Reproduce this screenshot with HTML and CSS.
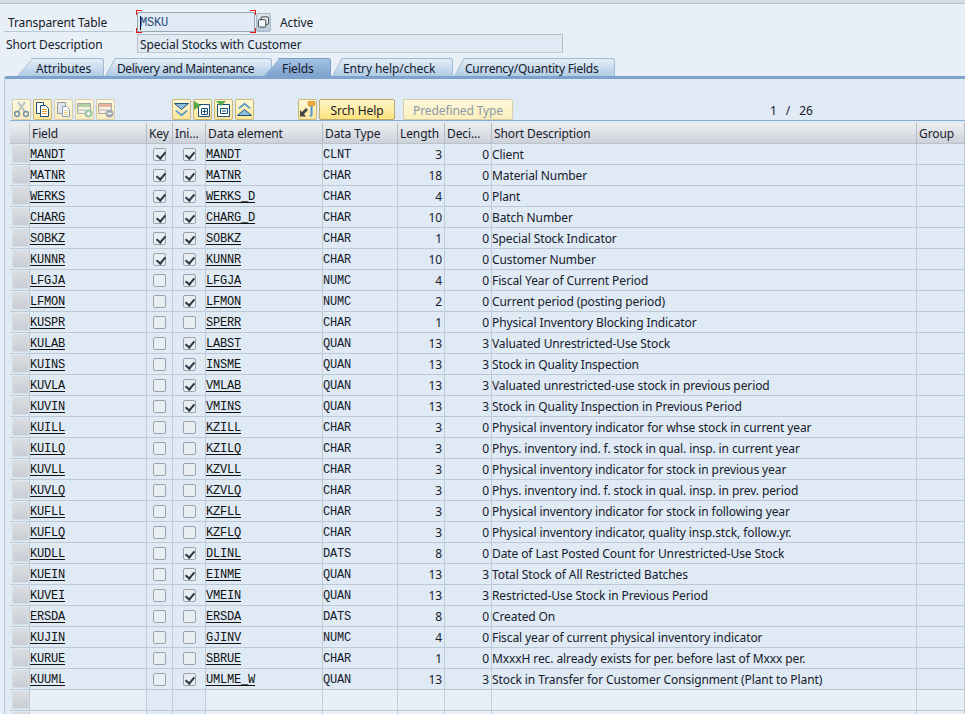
FILE: index.html
```html
<!DOCTYPE html>
<html lang="en">
<head>
<meta charset="utf-8">
<title>Transparent Table MSKU</title>
<link rel="stylesheet" href="styles.css">
</head>
<body>
<div class="topstrip"></div>
<section class="form">
  <div class="form-row first">
    <label class="lab lab-a">Transparent Table</label>
    <div class="focus-field"><div class="input input-name"><span class="caret"></span><span class="mono">MSKU</span></div></div>
    <button class="copybtn" aria-label="Other object"><svg width="14" height="14" viewBox="0 0 14 14"><rect x="4.500" y="1.500" width="8" height="8" rx="1" fill="#e8eff7" stroke="#333"/><rect x="1.500" y="4.500" width="8" height="8" rx="1" fill="#f4f7fa" stroke="#333"/></svg></button>
    <span class="status">Active</span>
  </div>
  <div class="form-row second">
    <label class="lab lab-b">Short Description</label>
    <div class="input input-desc">Special Stocks with Customer</div>
  </div>
</section>
<nav class="tabs">
  <div class="tab t1">Attributes</div>
  <div class="tab t2">Delivery and Maintenance</div>
  <div class="tab t3 active">Fields</div>
  <div class="tab t4">Entry help/check</div>
  <div class="tab t5">Currency/Quantity Fields</div>
</nav>
<main class="panel">
  <div class="toolbar">
    <div class="tgroup g1">
      <button class="ib dim"><svg viewBox="0 0 17 17"><path d="M5 1l7 10M12 1L5 11" stroke="#b9c2c4" stroke-width="2" fill="none"/><circle cx="4" cy="13" r="2.400" fill="none" stroke="#6f93ad" stroke-width="1.500"/><circle cx="13" cy="13" r="2.400" fill="none" stroke="#6f93ad" stroke-width="1.500"/></svg></button>
      <button class="ib"><svg viewBox="0 0 17 17"><path d="M2.500 1.500h7v11h-7z" fill="#fff" stroke="#1c4f78"/><path d="M6.500 4.500h5l3 3v8h-8z" fill="#fff" stroke="#1c4f78"/><path d="M8 8.500h5M8 10.500h5M8 12.500h5" stroke="#e0a030"/></svg></button>
      <button class="ib dim"><svg viewBox="0 0 17 17"><path d="M2.500 1.500h8v11h-8z" fill="#e4e8ec" stroke="#8d9aa6"/><path d="M7.500 5.500h4l3 3v7h-7z" fill="#fff" stroke="#7e9cb4"/><path d="M9 9.500h4M9 11.500h4M9 13.500h4" stroke="#ecc777"/></svg></button>
      <button class="ib dim"><svg viewBox="0 0 17 17"><path d="M1.500 2.500h13v10h-13z" fill="#f6f3e4" stroke="#a3aca0"/><path d="M2 3h12v3H2z" fill="#b5cfa3"/><path d="M2 9h8" stroke="#a9b4a9"/><circle cx="12.500" cy="12.500" r="4" fill="#9cc5a6"/><path d="M10.500 12.500h4M12.500 10.500v4" stroke="#fff" stroke-width="1.500"/></svg></button>
      <button class="ib dim"><svg viewBox="0 0 17 17"><path d="M1.500 2.500h13v10h-13z" fill="#f6f3e4" stroke="#a9a9a0"/><path d="M2 3h12v3H2z" fill="#e9b3a1"/><path d="M2 9h8" stroke="#b5b5a8"/><circle cx="12.500" cy="12.500" r="4" fill="#a0a9b2"/><path d="M10.500 12.500h4" stroke="#fff" stroke-width="1.500"/></svg></button>
    </div>
    <div class="tgroup g2">
      <button class="ib"><svg viewBox="0 0 17 17"><path d="M1.500 2.500h14l-7 6z" fill="#8fbfe0" stroke="#1c4f78"/><path d="M3.500 9l5 4 5-4 1.500 1-6.500 5.500L2 10z" fill="#5d9ac8"/></svg></button>
      <button class="ib"><svg viewBox="0 0 17 17"><path d="M4.500 3.500h11v12h-11z" fill="#fff" stroke="#1c4f78"/><path d="M0 0l7 4.500L0 9z" fill="#5aa84a"/><path d="M7.500 7.500h6v6h-6z" fill="#fff" stroke="#1c4f78"/><path d="M8.500 10.500h4M10.500 8.500v4" stroke="#1c4f78"/></svg></button>
      <button class="ib"><svg viewBox="0 0 17 17"><path d="M2.500 3.500h12v12h-12z" fill="#fff" stroke="#1c4f78"/><path d="M1 0h10L6 5z" fill="#5aa84a"/><path d="M5.500 7.500h7v5h-7z" fill="#fff" stroke="#1c4f78"/><path d="M7 10h4" stroke="#1c4f78"/></svg></button>
      <button class="ib"><svg viewBox="0 0 17 17"><path d="M8.500 1.500l6.500 5.500-1.500 1-5-4-5 4L2 7z" fill="#5d9ac8"/><path d="M8.500 8.500l7 6h-14z" fill="#8fbfe0" stroke="#1c4f78"/></svg></button>
    </div>
    <div class="tgroup g3">
      <button class="ib"><svg viewBox="0 0 17 17"><rect x="9" y="0" width="7" height="5" rx="2" fill="#efa93a" stroke="#b8741a" stroke-width=".6"/><path d="M12.500 5v9l-1.500 1.500" stroke="#5d9ac8" stroke-width="2.200" fill="none"/><path d="M1 15.500V9l2 2 4-4 2 2-4 4 2 2.500z" fill="#444"/></svg></button>
      <button class="tb">Srch Help</button>
    </div>
    <button class="tb off predefined">Predefined Type</button>
    <span class="pager">1 / 26</span>
  </div>
  <div class="tablewrap">
  <table class="grid">
    <colgroup><col class="c0"><col class="c1"><col class="c2"><col class="c3"><col class="c4"><col class="c5"><col class="c6"><col class="c7"><col class="c8"><col class="c9"></colgroup>
    <thead><tr><th></th><th>Field</th><th>Key</th><th>Ini...</th><th>Data element</th><th>Data Type</th><th>Length</th><th>Deci...</th><th>Short Description</th><th>Group</th></tr></thead>
    <tbody>
<tr><td class="sel"><i></i></td><td class="fn">MANDT</td><td class="ck"><span class="cb on"></span></td><td class="ck"><span class="cb on"></span></td><td class="fn">MANDT</td><td class="ty">CLNT</td><td class="nu">3</td><td class="nu">0</td><td class="de">Client</td><td></td></tr>
<tr><td class="sel"><i></i></td><td class="fn">MATNR</td><td class="ck"><span class="cb on"></span></td><td class="ck"><span class="cb on"></span></td><td class="fn">MATNR</td><td class="ty">CHAR</td><td class="nu">18</td><td class="nu">0</td><td class="de">Material Number</td><td></td></tr>
<tr><td class="sel"><i></i></td><td class="fn">WERKS</td><td class="ck"><span class="cb on"></span></td><td class="ck"><span class="cb on"></span></td><td class="fn">WERKS_D</td><td class="ty">CHAR</td><td class="nu">4</td><td class="nu">0</td><td class="de">Plant</td><td></td></tr>
<tr><td class="sel"><i></i></td><td class="fn">CHARG</td><td class="ck"><span class="cb on"></span></td><td class="ck"><span class="cb on"></span></td><td class="fn">CHARG_D</td><td class="ty">CHAR</td><td class="nu">10</td><td class="nu">0</td><td class="de">Batch Number</td><td></td></tr>
<tr><td class="sel"><i></i></td><td class="fn">SOBKZ</td><td class="ck"><span class="cb on"></span></td><td class="ck"><span class="cb on"></span></td><td class="fn">SOBKZ</td><td class="ty">CHAR</td><td class="nu">1</td><td class="nu">0</td><td class="de">Special Stock Indicator</td><td></td></tr>
<tr><td class="sel"><i></i></td><td class="fn">KUNNR</td><td class="ck"><span class="cb on"></span></td><td class="ck"><span class="cb on"></span></td><td class="fn">KUNNR</td><td class="ty">CHAR</td><td class="nu">10</td><td class="nu">0</td><td class="de">Customer Number</td><td></td></tr>
<tr><td class="sel"><i></i></td><td class="fn">LFGJA</td><td class="ck"><span class="cb"></span></td><td class="ck"><span class="cb on"></span></td><td class="fn">LFGJA</td><td class="ty">NUMC</td><td class="nu">4</td><td class="nu">0</td><td class="de">Fiscal Year of Current Period</td><td></td></tr>
<tr><td class="sel"><i></i></td><td class="fn">LFMON</td><td class="ck"><span class="cb"></span></td><td class="ck"><span class="cb on"></span></td><td class="fn">LFMON</td><td class="ty">NUMC</td><td class="nu">2</td><td class="nu">0</td><td class="de">Current period (posting period)</td><td></td></tr>
<tr><td class="sel"><i></i></td><td class="fn">KUSPR</td><td class="ck"><span class="cb"></span></td><td class="ck"><span class="cb"></span></td><td class="fn">SPERR</td><td class="ty">CHAR</td><td class="nu">1</td><td class="nu">0</td><td class="de">Physical Inventory Blocking Indicator</td><td></td></tr>
<tr><td class="sel"><i></i></td><td class="fn">KULAB</td><td class="ck"><span class="cb"></span></td><td class="ck"><span class="cb on"></span></td><td class="fn">LABST</td><td class="ty">QUAN</td><td class="nu">13</td><td class="nu">3</td><td class="de">Valuated Unrestricted-Use Stock</td><td></td></tr>
<tr><td class="sel"><i></i></td><td class="fn">KUINS</td><td class="ck"><span class="cb"></span></td><td class="ck"><span class="cb on"></span></td><td class="fn">INSME</td><td class="ty">QUAN</td><td class="nu">13</td><td class="nu">3</td><td class="de">Stock in Quality Inspection</td><td></td></tr>
<tr><td class="sel"><i></i></td><td class="fn">KUVLA</td><td class="ck"><span class="cb"></span></td><td class="ck"><span class="cb on"></span></td><td class="fn">VMLAB</td><td class="ty">QUAN</td><td class="nu">13</td><td class="nu">3</td><td class="de">Valuated unrestricted-use stock in previous period</td><td></td></tr>
<tr><td class="sel"><i></i></td><td class="fn">KUVIN</td><td class="ck"><span class="cb"></span></td><td class="ck"><span class="cb on"></span></td><td class="fn">VMINS</td><td class="ty">QUAN</td><td class="nu">13</td><td class="nu">3</td><td class="de">Stock in Quality Inspection in Previous Period</td><td></td></tr>
<tr><td class="sel"><i></i></td><td class="fn">KUILL</td><td class="ck"><span class="cb"></span></td><td class="ck"><span class="cb"></span></td><td class="fn">KZILL</td><td class="ty">CHAR</td><td class="nu">3</td><td class="nu">0</td><td class="de">Physical inventory indicator for whse stock in current year</td><td></td></tr>
<tr><td class="sel"><i></i></td><td class="fn">KUILQ</td><td class="ck"><span class="cb"></span></td><td class="ck"><span class="cb"></span></td><td class="fn">KZILQ</td><td class="ty">CHAR</td><td class="nu">3</td><td class="nu">0</td><td class="de">Phys. inventory ind. f. stock in qual. insp. in current year</td><td></td></tr>
<tr><td class="sel"><i></i></td><td class="fn">KUVLL</td><td class="ck"><span class="cb"></span></td><td class="ck"><span class="cb"></span></td><td class="fn">KZVLL</td><td class="ty">CHAR</td><td class="nu">3</td><td class="nu">0</td><td class="de">Physical inventory indicator for stock in previous year</td><td></td></tr>
<tr><td class="sel"><i></i></td><td class="fn">KUVLQ</td><td class="ck"><span class="cb"></span></td><td class="ck"><span class="cb"></span></td><td class="fn">KZVLQ</td><td class="ty">CHAR</td><td class="nu">3</td><td class="nu">0</td><td class="de">Phys. inventory ind. f. stock in qual. insp. in prev. period</td><td></td></tr>
<tr><td class="sel"><i></i></td><td class="fn">KUFLL</td><td class="ck"><span class="cb"></span></td><td class="ck"><span class="cb"></span></td><td class="fn">KZFLL</td><td class="ty">CHAR</td><td class="nu">3</td><td class="nu">0</td><td class="de">Physical inventory indicator for stock in following year</td><td></td></tr>
<tr><td class="sel"><i></i></td><td class="fn">KUFLQ</td><td class="ck"><span class="cb"></span></td><td class="ck"><span class="cb"></span></td><td class="fn">KZFLQ</td><td class="ty">CHAR</td><td class="nu">3</td><td class="nu">0</td><td class="de">Physical inventory indicator, quality insp.stck, follow.yr.</td><td></td></tr>
<tr><td class="sel"><i></i></td><td class="fn">KUDLL</td><td class="ck"><span class="cb"></span></td><td class="ck"><span class="cb on"></span></td><td class="fn">DLINL</td><td class="ty">DATS</td><td class="nu">8</td><td class="nu">0</td><td class="de">Date of Last Posted Count for Unrestricted-Use Stock</td><td></td></tr>
<tr><td class="sel"><i></i></td><td class="fn">KUEIN</td><td class="ck"><span class="cb"></span></td><td class="ck"><span class="cb on"></span></td><td class="fn">EINME</td><td class="ty">QUAN</td><td class="nu">13</td><td class="nu">3</td><td class="de">Total Stock of All Restricted Batches</td><td></td></tr>
<tr><td class="sel"><i></i></td><td class="fn">KUVEI</td><td class="ck"><span class="cb"></span></td><td class="ck"><span class="cb on"></span></td><td class="fn">VMEIN</td><td class="ty">QUAN</td><td class="nu">13</td><td class="nu">3</td><td class="de">Restricted-Use Stock in Previous Period</td><td></td></tr>
<tr><td class="sel"><i></i></td><td class="fn">ERSDA</td><td class="ck"><span class="cb"></span></td><td class="ck"><span class="cb"></span></td><td class="fn">ERSDA</td><td class="ty">DATS</td><td class="nu">8</td><td class="nu">0</td><td class="de">Created On</td><td></td></tr>
<tr><td class="sel"><i></i></td><td class="fn">KUJIN</td><td class="ck"><span class="cb"></span></td><td class="ck"><span class="cb"></span></td><td class="fn">GJINV</td><td class="ty">NUMC</td><td class="nu">4</td><td class="nu">0</td><td class="de">Fiscal year of current physical inventory indicator</td><td></td></tr>
<tr><td class="sel"><i></i></td><td class="fn">KURUE</td><td class="ck"><span class="cb"></span></td><td class="ck"><span class="cb"></span></td><td class="fn">SBRUE</td><td class="ty">CHAR</td><td class="nu">1</td><td class="nu">0</td><td class="de">MxxxH rec. already exists for per. before last of Mxxx per.</td><td></td></tr>
<tr><td class="sel"><i></i></td><td class="fn">KUUML</td><td class="ck"><span class="cb"></span></td><td class="ck"><span class="cb on"></span></td><td class="fn">UMLME_W</td><td class="ty">QUAN</td><td class="nu">13</td><td class="nu">3</td><td class="de">Stock in Transfer for Customer Consignment (Plant to Plant)</td><td></td></tr>
<tr class="empty"><td class="sel"><i></i></td><td></td><td class="dk"></td><td class="dk"></td><td></td><td></td><td></td><td></td><td></td><td></td></tr>
<tr class="empty"><td class="sel"><i></i></td><td></td><td class="dk"></td><td class="dk"></td><td></td><td></td><td></td><td></td><td></td><td></td></tr>
    </tbody>
  </table>
  </div>
</main>
</body>
</html>
```
FILE: styles.css
```css
* { box-sizing: border-box; }
html, body { margin: 0; height: 714px; overflow: hidden; }
body { background: #e8eff7; color: #16202c; font: 12px/16px "Noto Sans", sans-serif; letter-spacing: -0.1px; width: 965px; }
button { font: inherit; letter-spacing: inherit; color: inherit; padding: 0; margin: 0; }
.mono { font-family: "Liberation Mono", monospace; }

.topstrip { height: 4px; background: #d6dee6; border-bottom: 1px solid #b5c2ce; }

.form { padding-top: 8px; height: 54px; }
.form-row { display: flex; align-items: center; }
.form-row.first { height: 20px; }
.form-row.second { height: 19px; margin-top: 2px; }
.lab { display: block; flex: none; }
.lab-a { padding-left: 4px; margin-left: 4px; border-bottom: 1px solid #b5c6d6; height: 20px; line-height: 21px; width: 129px; }
.lab-b { padding-left: 6px; height: 19px; line-height: 21px; width: 137px; }
.lab-a + .focus-field { margin-left: 4px; }
.input { height: 19px; background: #dfeaf4; border: 1px solid #b3bcc4; border-bottom-color: #c3cbd2; line-height: 19px; padding-left: 2px; }
.focus-field { position: relative; width: 118px; height: 20px; }
.focus-field::before { content: ""; position: absolute; inset: -2px -1px -1px -1px; background:
  linear-gradient(#e01a1a,#e01a1a) 0 0/6px 1px no-repeat, linear-gradient(#e01a1a,#e01a1a) 0 0/1px 5px no-repeat,
  linear-gradient(#e01a1a,#e01a1a) 100% 0/6px 1px no-repeat, linear-gradient(#e01a1a,#e01a1a) 100% 0/1px 5px no-repeat,
  linear-gradient(#e01a1a,#e01a1a) 0 100%/6px 1px no-repeat, linear-gradient(#e01a1a,#e01a1a) 0 100%/1px 5px no-repeat,
  linear-gradient(#e01a1a,#e01a1a) 100% 100%/6px 1px no-repeat, linear-gradient(#e01a1a,#e01a1a) 100% 100%/1px 5px no-repeat; }
.input-name { width: 118px; height: 20px; border-color: #9aa6b0; color: #2c4a7a; font-size: 12px; letter-spacing: -.2px; line-height: 16px; padding: 2px 0 0 2px; display: flex; align-items: center; }
.caret { width: 1px; height: 14px; background: #111; margin-right: -1px; flex: none; }
.copybtn { width: 15px; height: 19px; margin-left: 1px; border: 1px solid #a9b8c6; border-radius: 2px; background: linear-gradient(#dbe5ef, #b9cbdd); display: flex; align-items: center; justify-content: center; }
.status { margin-left: 9px; padding-top: 2px; }
.input-desc { width: 426px; }

.tabs { display: flex; height: 19px; margin-top: -1px; padding-left: 25px; align-items: flex-end; position: relative; z-index: 1; }
.tab { position: relative; z-index: 0; height: 18px; line-height: 21px; flex: none; --bg: linear-gradient(#e5eef7, #b0cbe5); --bd: #9db9d6; --sk: -29deg; }
.tab::before { content: ""; position: absolute; top: 0; bottom: 0; left: 0; width: 18px; background: var(--bg); border: solid var(--bd); border-width: 1px 0 0 1px; transform: skewX(var(--sk)); z-index: -1; }
.tab::after { content: ""; position: absolute; top: 0; bottom: 0; left: 6px; right: 0; background: var(--bg); border: solid var(--bd); border-width: 1px 1px 0 0; border-radius: 0 3px 0 0; z-index: -1; }
.t1 { width: 79px; padding-left: 11px; --sk: -41deg; }
.t2 { width: 162px; margin-left: 6px; padding-left: 7px; letter-spacing: -.4px; }
.t3 { width: 59px; padding-left: 10px; z-index: 2; --bg: linear-gradient(#a5c3e2, #7da2cc); --bd: #7a9fc8; --sk: -41deg; }
.t4 { width: 116px; margin-left: 6px; padding-left: 6px; }
.t5 { width: 156px; margin-left: 6px; padding-left: 6px; letter-spacing: -.25px; }

.panel { margin-left: 4px; height: 638px; overflow: hidden; background: #dfeaf4; border-top: 3px solid #7da2cc; border-left: 1px solid #b5c9dd; border-top-left-radius: 3px; padding: 20px 0 0 5px; }

.toolbar { display: flex; align-items: center; height: 21px; }
.tgroup { display: flex; gap: 2px; flex: none; }
.g1 { margin-left: 2px; width: 160px; }
.g2 { width: 126px; }
.g3 { width: 105px; }
.ib { width: 19px; height: 21px; border: 1px solid #cbb877; border-radius: 2px; background: linear-gradient(#fff8d6, #fde69b); display: flex; align-items: center; justify-content: center; }
.ib svg { width: 17px; height: 17px; display: block; }
.ib.dim { border-color: #d8ceac; background: linear-gradient(#fdf8e0, #faedc0); }
.tb { height: 21px; border: 1px solid #b9a96c; border-radius: 2px; background: linear-gradient(#fff6c8, #fde27e); width: 76px; text-align: center; padding-top: 2px; }
.tb.off { width: 110px; color: #8f9aa6; background: linear-gradient(#fdf8dd, #faeebb); border-color: #d8ceac; }
.pager { margin-left: 257px; word-spacing: 6px; padding-top: 2px; }

.tablewrap { border-top: 1px solid #8aadd0; padding-top: 2px; width: 960px; overflow: hidden; }
.grid { border-collapse: separate; border-spacing: 0; table-layout: fixed; width: 955px; }
.c0 { width: 20px; } .c1 { width: 117px; } .c2 { width: 26px; } .c3 { width: 33px; } .c4 { width: 117px; }
.c5 { width: 75px; } .c6 { width: 47px; } .c7 { width: 47px; } .c8 { width: 425px; } .c9 { width: 48px; }
.grid th { height: 21px; padding: 1px 0 0 2px; font-weight: 400; text-align: left; background: linear-gradient(#eceef1, #cdd2d9); border-right: 1px solid #b3bcc6; border-bottom: 1px solid #b9c3cd; white-space: nowrap; overflow: hidden; }
.grid td { height: 21px; padding: 2px 0 0; border-right: 1px solid #c0ccd8; border-bottom: 1px solid #bcc9d6; white-space: nowrap; overflow: hidden; }
.grid tr.empty td { background: #e8eff7; }
.grid tr.empty td.sel { background: #dfeaf4; }
.grid tr.empty td.dk { background: #dfeaf4; }
.grid td.sel { padding: 1px 0 1px 2px; }
.sel i { display: block; height: 18px; width: 17px; background: linear-gradient(#dadde2, #c9cdd4); border: 1px solid #d8dde3; border-radius: 1px; }
.fn { font-family: "Liberation Mono", monospace; letter-spacing: -.2px; text-decoration: underline; text-decoration-thickness: 1px; text-underline-offset: 2px; color: #111; }
.ty { font-family: "Liberation Mono", monospace; letter-spacing: -.2px; }
.grid td.nu { text-align: right; padding-right: 2px; }
.grid td.ck { text-align: center; padding: 0; }
.cb { display: block; position: relative; width: 13px; height: 13px; margin: 0 auto; background: #e9eef3; border: 1px solid #9aa3ab; border-radius: 2px; }
.cb.on::after { content: ""; position: absolute; left: 3.500px; top: 1px; width: 4px; height: 7px; border: solid #2c3a46; border-width: 0 2px 2px 0; transform: rotate(40deg); }
```
